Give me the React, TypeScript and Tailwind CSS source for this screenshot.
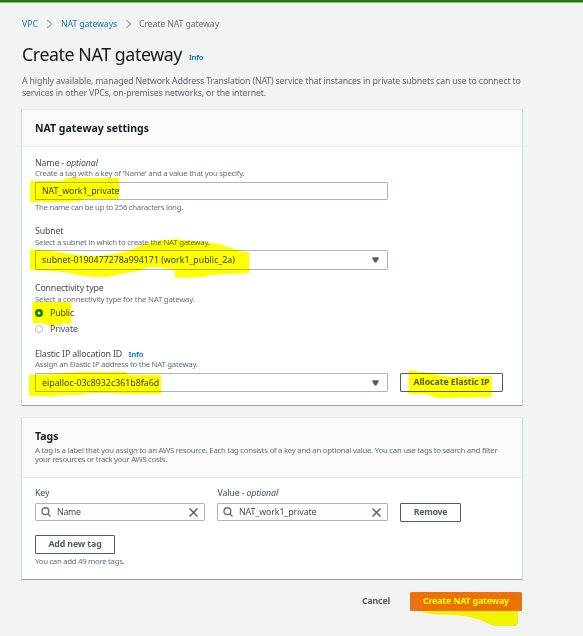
import type { ReactNode } from "react";

function Label({ children, className = "" }: { children: ReactNode; className?: string }) {
  return (
    <div className={`h-[12px] whitespace-nowrap text-[8.8px] leading-[12px] tracking-[-0.15px] text-[#444b54] ${className}`}>
      {children}
    </div>
  );
}

function Hint({ children, tracking = "tracking-[-0.275px]", className = "" }: { children: ReactNode; tracking?: string; className?: string }) {
  return (
    <div className={`h-[10px] whitespace-nowrap text-[7.85px] leading-[10px] text-[#687078] ${tracking} ${className}`}>
      {children}
    </div>
  );
}

function Chevron() {
  return (
    <svg className="h-[10px] w-[8px]" viewBox="0 0 8 10" fill="none" stroke="#aab7b8" strokeWidth="1.4">
      <path d="M1.2 1 L5.6 5 L1.2 9" />
    </svg>
  );
}

function Caret() {
  return (
    <svg className="ml-auto h-[6px] w-[7px]" viewBox="0 0 7 6">
      <path d="M0.3 0.2 H6.7 V1.4 L4.3 5.6 H2.7 L0.3 1.4 Z" fill="#545b64" />
    </svg>
  );
}

function Radio({ checked = false }: { checked?: boolean }) {
  return (
    <svg className="mr-[7px] h-[8px] w-[8px]" viewBox="0 0 8 8" fill="#ffffff">
      {checked ? (
        <circle cx="4" cy="4" r="2.75" stroke="#117a02" strokeWidth="2.5" />
      ) : (
        <circle cx="4" cy="4" r="3.5" stroke="#aab7b8" strokeWidth="0.9" />
      )}
    </svg>
  );
}

function SelectBox({ children, className = "" }: { children: ReactNode; className?: string }) {
  return (
    <div className={`flex w-[353px] items-center rounded-[1px] border border-[#aab7b8] bg-white pl-[6px] pr-[8px] text-[8.8px] leading-[12px] text-[#3b424a] ${className}`}>
      {children}
      <Caret />
    </div>
  );
}

function TagInput({ children, className = "" }: { children: ReactNode; className?: string }) {
  return (
    <div className={`flex h-[18px] items-center rounded-[1px] border border-[#aab7b8] bg-white pl-[5px] pr-[6px] text-[8.8px] leading-[12px] text-[#444b54] ${className}`}>
      <svg className="mr-[6px] h-[10px] w-[10px]" viewBox="0 0 10 10" fill="none" stroke="#687078" strokeWidth="1.4">
        <circle cx="4.4" cy="4.2" r="3.4" />
        <path d="M6.8 6.7 L9.6 9.5" />
      </svg>
      {children}
      <svg className="ml-auto h-[9px] w-[9px]" viewBox="0 0 9 9" fill="none" stroke="#545b64" strokeWidth="1.4">
        <path d="M0.5 0.5 L8.5 8.5 M8.5 0.5 L0.5 8.5" />
      </svg>
    </div>
  );
}

function Button({ children, className = "" }: { children: ReactNode; className?: string }) {
  return (
    <button className={`flex h-[19px] items-start justify-center whitespace-nowrap rounded-[1px] border pt-[2px] text-[8.8px] font-bold leading-[12px] ${className}`}>
      {children}
    </button>
  );
}

function Card({ header, children, className = "" }: { header: ReactNode; children: ReactNode; className?: string }) {
  return (
    <section className={`-ml-px w-[502px] border border-t-[#eaeded] border-r-[#d5dbdb] border-b-[#95a5a6] border-l-[#d5dbdb] bg-white ${className}`}>
      <header className="border-b border-[#eaeded] bg-[#fafafa] pl-[13px] pt-[11px]">{header}</header>
      <div className="pb-[13px] pl-[13px]">{children}</div>
    </section>
  );
}

function Highlighter() {
  return (
    <svg className="pointer-events-none absolute left-0 top-0 h-[636px] w-[583px] mix-blend-multiply" viewBox="0 0 1749 1908" fill="#ffff00">
      <path transform="translate(45 315)" d="M45 228 H142 L155 219 H312 V283 H205 L195 287 L165 291 H45 Z" />
      <path
        transform="translate(45 660)"
        d="M45 88 L115 94 L190 105 L235 108 L290 104 L340 92 L390 72 L440 60 L490 58 L520 62 L560 65 L610 72 L650 84 L670 92 L702 97 V160 L640 162 L590 165 L560 172 L480 173 V150 L430 142 H400 L370 152 L330 160 L280 170 L240 171 L190 166 L160 158 L110 153 L45 151 Z"
      />
      <path transform="translate(45 660)" d="M52 246 H168 V311 H135 L130 316 H100 L85 310 H52 Z" />
      <path
        transform="translate(45 1005)"
        d="M42 119 H100 L104 117 L160 114 L192 111 H333 V116 L350 119 H438 V177 H310 L295 174 H215 L212 178 L185 180 H125 V183 H42 Z"
      />
      <path transform="translate(795 705)" d="M431 407 H455 L457 411 H480 L520 420 L560 425 H640 L680 422 V486 L520 489 L500 483 L485 478 L431 477 Z" />
      <path transform="translate(795 1230)" d="M474 550 H590 L595 556 H745 L759 565 V640 L752 648 H687 L640 628 L600 618 L565 615 L520 614 L474 608 Z" />
    </svg>
  );
}

export default function App() {
  return (
    <div className="relative isolate h-[636px] w-[583px] overflow-hidden bg-[#f2f3f3] font-['Noto_Sans',sans-serif]">
      <div className="h-[3px] border-b border-[#a3a8a3] bg-[#1d8102]" />
      <main className="pl-[22px] pt-[15px]">
        <nav className="flex h-[12px] items-center whitespace-nowrap text-[8.8px] leading-[12px] text-[#1f74bf]">
          <span className="w-[24px]">VPC</span>
          <Chevron />
          <span className="ml-[7px] w-[64px] tracking-[-0.14px]">NAT gateways</span>
          <Chevron />
          <span className="ml-[6px] tracking-[-0.16px] text-[#687078]">Create NAT gateway</span>
        </nav>
        <div className="mt-[12px] flex h-[24px] whitespace-nowrap">
          <h1 className="w-[167px] text-[17.8px] leading-[24px] tracking-[-0.42px] text-[#16191f]">Create NAT gateway</h1>
          <span className="pt-[10px] text-[7.7px] font-semibold leading-[10px] tracking-[-0.25px] text-[#0073bb]">Info</span>
        </div>
        <p className="mt-[9px] whitespace-nowrap text-[8.8px] leading-[12px] tracking-[-0.165px] text-[#5f676f]">
          A highly available, managed Network Address Translation (NAT) service that instances in private subnets can use to connect to
          <br />
          services in other VPCs, on-premises networks, or the internet.
        </p>

        <Card
          className="mt-[10px]"
          header={<h2 className="mb-[11px] text-[10.5px] font-bold leading-[14px] text-[#16191f]">NAT gateway settings</h2>}
        >
          <Label className="box-content pt-[10px]">
            Name - <i className="tracking-[-0.1px]">optional</i>
          </Label>
          <Hint className="-mt-px">Create a tag with a key of 'Name' and a value that you specify.</Hint>
          <div className="mt-[4px] flex h-[18px] w-[353px] items-center rounded-[1px] border border-[#aab7b8] pl-[6px] text-[8.8px] leading-[12px] tracking-[-0.08px] text-[#3b424a]">
            NAT_work1_private
          </div>
          <Hint className="mt-[2px]" tracking="tracking-[-0.31px]">The name can be up to 256 characters long.</Hint>

          <Label className="mt-[13px]">Subnet</Label>
          <Hint>Select a subnet in which to create the NAT gateway.</Hint>
          <SelectBox className="mt-[3px] h-[20px]">subnet-0190477278a994171 (work1_public_2a)</SelectBox>

          <Label className="mt-[12px]">Connectivity type</Label>
          <Hint tracking="tracking-[-0.24px]">Select a connectivity type for the NAT gateway.</Hint>
          <div className="mt-[3px] flex h-[12px] items-center">
            <Radio checked />
            <Label>Public</Label>
          </div>
          <div className="mt-[4px] flex h-[12px] items-center">
            <Radio />
            <Label>Private</Label>
          </div>

          <div className="mt-[13px] flex h-[12px]">
            <Label className="w-[93.5px]">Elastic IP allocation ID</Label>
            <span className="text-[7.9px] font-semibold leading-[12px] tracking-[-0.25px] text-[#0073bb]">Info</span>
          </div>
          <Hint className="-mt-px" tracking="tracking-[-0.29px]">Assign an Elastic IP address to the NAT gateway.</Hint>
          <div className="mt-[4px] flex gap-[12px]">
            <SelectBox className="h-[19px]">eipalloc-03c8932c361b8fa6d</SelectBox>
            <Button className="w-[103px] border-[#545b64] bg-white tracking-[-0.08px] text-[#545b64]">Allocate Elastic IP</Button>
          </div>
        </Card>

        <Card
          className="mt-[11px]"
          header={
            <>
              <h2 className="text-[10.5px] font-bold leading-[14px] text-[#16191f]">Tags</h2>
              <Hint className="mt-[2px]">
                A tag is a label that you assign to an AWS resource. Each tag consists of a key and an optional value. You can use tags to search and filter
              </Hint>
              <Hint className="-mt-px mb-[13px]" tracking="tracking-[-0.34px]">your resources or track your AWS costs.</Hint>
            </>
          }
        >
          <div className="flex pt-[9px]">
            <Label className="w-[182.5px]">Key</Label>
            <Label>
              Value - <i className="tracking-[-0.1px]">optional</i>
            </Label>
          </div>
          <div className="mt-[4px] flex gap-[12px]">
            <TagInput className="w-[170px] tracking-[-0.3px]">Name</TagInput>
            <TagInput className="w-[171px] tracking-[-0.08px]">NAT_work1_private</TagInput>
            <Button className="w-[61px] border-[#545b64] bg-white tracking-[-0.3px] text-[#545b64]">Remove</Button>
          </div>
          <Button className="mt-[13px] w-[80px] border-[#545b64] bg-white tracking-[-0.15px] text-[#545b64]">Add new tag</Button>
          <Hint className="mt-[2px]" tracking="tracking-[-0.32px]">You can add 49 more tags.</Hint>
        </Card>

        <div className="mt-[12px] flex w-[500px] justify-end">
          <Button className="mr-[19px] border-transparent tracking-[-0.17px] text-[#545b64]">Cancel</Button>
          <Button className="w-[112px] border-[#ec7211] bg-[#ec7211] tracking-[-0.16px] text-white">Create NAT gateway</Button>
        </div>
      </main>
      <Highlighter />
    </div>
  );
}
